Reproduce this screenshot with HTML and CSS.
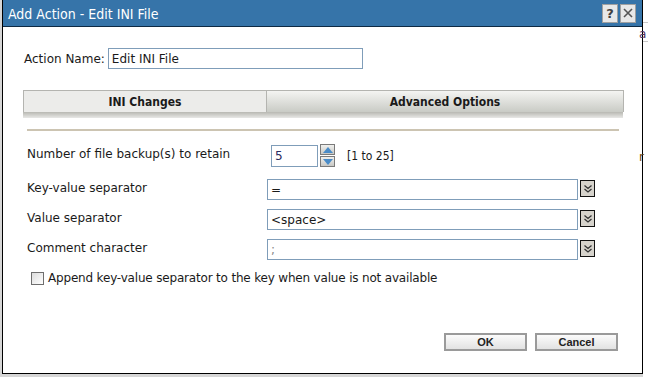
FILE: index.html
```html
<!doctype html>
<html lang="en">
<head>
  <meta charset="UTF-8">
  <title>Add Action - Edit INI File</title>
  <link rel="stylesheet" href="styles.css">
</head>
<body>
  <div class="desk">
    <div class="dialog">
      <div class="titlebar">
        <span class="title">Add Action - Edit INI File</span>
        <span class="tbtns">
          <span class="tbtn">?</span>
          <span class="tbtn">
            <svg width="12" height="12" viewBox="0 0 12 12"><path d="M2 2 L10 10 M10 2 L2 10" stroke="#555" stroke-width="1.6"/></svg>
          </span>
        </span>
      </div>
      <div class="body">
        <div class="namerow">
          <label>Action Name:</label>
          <input class="txt name" type="text" value="Edit INI File">
        </div>

        <div class="tabs">
          <div class="tab active">INI Changes</div>
          <div class="tab">Advanced Options</div>
        </div>
        <div class="tabshadow"></div>
        <div class="rule"></div>

        <div class="form">
          <div class="row first">
            <label>Number of file backup(s) to retain</label>
            <div class="spinwrap">
              <input class="txt spin" type="text" value="5">
              <span class="spinbtns">
                <span class="sb"><svg width="10" height="6" viewBox="0 0 10 6"><path d="M5 0 L10 6 L0 6 Z" fill="#4a8cc8"/></svg></span>
                <span class="sb"><svg width="10" height="6" viewBox="0 0 10 6"><path d="M0 0 L10 0 L5 6 Z" fill="#4a8cc8"/></svg></span>
              </span>
              <span class="range">[1 to 25]</span>
            </div>
          </div>
          <div class="row">
            <label>Key-value separator</label>
            <div class="combo">
              <input class="txt wide" type="text" value="=">
              <span class="drop"><svg width="10" height="10" viewBox="0 0 10 10"><path d="M1.5 1.5 L5 4.5 L8.5 1.5 M1.5 5 L5 8 L8.5 5" fill="none" stroke="#333" stroke-width="1.3"/></svg></span>
            </div>
          </div>
          <div class="row">
            <label>Value separator</label>
            <div class="combo">
              <input class="txt wide" type="text" value="&lt;space&gt;">
              <span class="drop"><svg width="10" height="10" viewBox="0 0 10 10"><path d="M1.5 1.5 L5 4.5 L8.5 1.5 M1.5 5 L5 8 L8.5 5" fill="none" stroke="#333" stroke-width="1.3"/></svg></span>
            </div>
          </div>
          <div class="row">
            <label>Comment character</label>
            <div class="combo">
              <input class="txt wide dim" type="text" value=";">
              <span class="drop"><svg width="10" height="10" viewBox="0 0 10 10"><path d="M1.5 1.5 L5 4.5 L8.5 1.5 M1.5 5 L5 8 L8.5 5" fill="none" stroke="#333" stroke-width="1.3"/></svg></span>
            </div>
          </div>
        </div>

        <div class="check">
          <span class="box"></span>
          <span class="checktext">Append key-value separator to the key when value is not available</span>
        </div>

        <div class="buttons">
          <button class="btn" type="button">OK</button>
          <button class="btn" type="button">Cancel</button>
        </div>
      </div>
    </div>
    <div class="behind">
      <div class="ln"></div>
      <div class="glyph">a</div>
      <div class="ln"></div>
      <div class="glyph dark">r</div>
    </div>
  </div>
</body>
</html>
```

FILE: styles.css
```css
body {
  margin: 0;
  padding: 0;
  background-color: #d6d6d6;
  font-family: "DejaVu Sans", sans-serif;
  font-size: 12px;
  color: #1a1a1a;
}

.desk {
  display: flex;
  height: 377px;
  overflow: hidden;
}

.dialog {
  width: 639px;
  height: 373px;
  margin-left: 2px;
  border: 1px solid #000000;
  border-top: none;
  background-color: #ffffff;
  display: flex;
  flex-direction: column;
}

.behind {
  flex: 1;
  background-color: #ffffff;
  padding-top: 22px;
  font-size: 12px;
}

.behind .ln {
  border-top: 1px solid #c8c8c8;
  height: 4px;
}

.behind .glyph {
  color: #503060;
  height: 14px;
  line-height: 14px;
  margin-left: -4px;
}

.behind .glyph.dark {
  color: #6a4a10;
  margin-top: 104px;
}

.titlebar {
  height: 26px;
  background-color: #3674a9;
  border-bottom: 1px solid #0e2a44;
  display: flex;
  align-items: center;
  justify-content: space-between;
  padding: 0 6px 0 5px;
}

.title {
  color: #ffffff;
  font-family: "DejaVu Sans Condensed", "DejaVu Sans", sans-serif;
  font-size: 14px;
  margin-top: 1px;
}

.tbtns {
  display: flex;
  gap: 2px;
}

.tbtn {
  width: 14px;
  height: 17px;
  background-color: #e8e8e8;
  border: 1px solid #a0a0a0;
  color: #404040;
  font-weight: bold;
  font-size: 13px;
  display: flex;
  align-items: center;
  justify-content: center;
}

.body {
  flex: 1;
  padding: 21px 19px 0 21px;
  position: relative;
}

.namerow {
  display: flex;
  align-items: center;
  gap: 3px;
}

.txt {
  font-family: "DejaVu Sans", sans-serif;
  font-size: 12px;
  color: #1a1a1a;
  border: 1px solid #7f9db9;
  height: 21px;
  box-sizing: border-box;
  padding: 0 3px;
  margin: 0;
  outline: none;
}

.name {
  width: 255px;
}

.tabs {
  display: flex;
  margin: 21px 0 0 -1px;
  height: 21px;
  border: 1px solid #b4b4b0;
  border-bottom: none;
  width: 599px;
  font-family: "DejaVu Sans Condensed", "DejaVu Sans", sans-serif;
}

.tab {
  flex: 1;
  display: flex;
  align-items: center;
  justify-content: center;
  font-weight: bold;
  background: linear-gradient(#f4f4f2, #c9cbc5);
}

.tab.active {
  flex: 0 0 242px;
  background: #ececea;
  border-right: 1px solid #b4b4b0;
}

.tabshadow {
  width: 600px;
  height: 6px;
  margin-left: -1px;
  background: linear-gradient(#b8b8b2, #e8e8e6);
}

.rule {
  width: 592px;
  margin: 11px 0 0 3px;
  border-top: 2px solid #ccc4b2;
}

.form {
  margin-top: 13px;
  display: flex;
  flex-direction: column;
  gap: 9px;
}

.row {
  display: flex;
  align-items: center;
  padding-left: 3px;
}

.row.first {
  margin-bottom: 3px;
}

.row label {
  width: 240px;
  margin-top: -4px;
}

.spinwrap {
  display: flex;
  align-items: center;
  padding-left: 4px;
}

.spin {
  width: 47px;
  height: 22px;
  color: #2a2a60;
}

.spinbtns {
  display: flex;
  flex-direction: column;
  gap: 1px;
  margin-left: 2px;
}

.sb {
  width: 13px;
  height: 9px;
  background: linear-gradient(#f0f0ee, #c8c8c4);
  border: 1px solid #7a7a7a;
  display: flex;
  align-items: center;
  justify-content: center;
}

.range {
  margin-left: 12px;
  font-family: "DejaVu Sans Condensed", "DejaVu Sans", sans-serif;
}

.combo {
  display: flex;
  align-items: flex-start;
  gap: 2px;
}

.wide {
  width: 311px;
}

.dim {
  color: #888888;
}

.drop {
  width: 13px;
  height: 15px;
  border: 1px solid #111111;
  background-color: #d6d3cc;
  display: flex;
  align-items: center;
  justify-content: center;
  margin-top: 1px;
}

.check {
  display: flex;
  align-items: center;
  gap: 4px;
  margin: 11px 0 0 7px;
}

.checktext {
  letter-spacing: -0.18px;
}

.box {
  width: 11px;
  height: 11px;
  border: 1px solid #6e6e6e;
  background: linear-gradient(135deg, #dcdcdc, #ffffff);
}

.buttons {
  position: absolute;
  right: 24px;
  bottom: 22px;
  display: flex;
  gap: 8px;
}

.btn {
  width: 83px;
  height: 18px;
  border: 2px solid #9a9a9a;
  background: linear-gradient(#fbfbfb, #e2e2e2);
  font-family: "Liberation Sans", Arial, sans-serif;
  font-weight: bold;
  font-size: 11px;
  color: #222222;
  padding: 0;
}
```
